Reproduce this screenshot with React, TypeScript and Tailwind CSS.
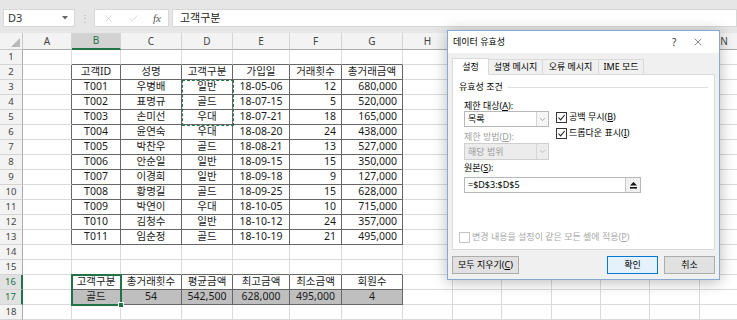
import React from 'react';
import { X, Check, ChevronDown } from 'lucide-react';

// hidden: columns that sit fully under the dialog, their letters are never seen
const COLS = [
  { k: 'A', w: 'w-[49px]' },
  { k: 'B', w: 'w-[49px]' },
  { k: 'C', w: 'w-[61px]' },
  { k: 'D', w: 'w-[51px]' },
  { k: 'E', w: 'w-[57px]' },
  { k: 'F', w: 'w-[52px]' },
  { k: 'G', w: 'w-[61px]' },
  { k: 'H', w: 'w-[50px]' },
  { k: 'I', w: 'w-[49px]', hidden: true },
  { k: 'J', w: 'w-[50px]', hidden: true },
  { k: 'K', w: 'w-[49px]', hidden: true },
  { k: 'L', w: 'w-[49px]', hidden: true },
  { k: 'M', w: 'w-[50px]', hidden: true },
  { k: 'N', w: 'w-[49px]' },
];

const customers = [
  ['T001', '우병배', '일반', '18-05-06', '12', '680,000'],
  ['T002', '표명규', '골드', '18-07-15', '5', '520,000'],
  ['T003', '손미선', '우대', '18-07-21', '18', '165,000'],
  ['T004', '윤연숙', '우대', '18-08-20', '24', '438,000'],
  ['T005', '박찬우', '골드', '18-08-21', '13', '527,000'],
  ['T006', '안순일', '일반', '18-09-15', '15', '350,000'],
  ['T007', '이경희', '일반', '18-09-18', '9', '127,000'],
  ['T008', '황명길', '골드', '18-09-25', '15', '628,000'],
  ['T009', '박연이', '우대', '18-10-05', '10', '715,000'],
  ['T010', '김청수', '일반', '18-10-12', '24', '357,000'],
  ['T011', '임순정', '골드', '18-10-19', '21', '495,000'],
];

// sheet contents, keyed by row number; values start at column B
const sheet: Record<number, string[]> = {
  2: ['고객ID', '성명', '고객구분', '가입일', '거래횟수', '총거래금액'],
  16: ['고객구분', '총거래횟수', '평균금액', '최고금액', '최소금액', '회원수'],
  17: ['골드', '54', '542,500', '628,000', '495,000', '4'],
};
customers.forEach((r, i) => (sheet[i + 3] = r));

const ROWS = Array.from({ length: 18 }, (_, i) => i + 1);

const inTable = (r: number, c: number) =>
  c >= 1 && c <= 6 && ((r >= 2 && r <= 13) || r === 16 || r === 17);

function Cell({ r, c }: { r: number; c: number }) {
  const col = COLS[c];
  const darkRight = inTable(r, c) || inTable(r, c + 1);
  const darkBottom = inTable(r, c) || inTable(r + 1, c);
  const value = sheet[r] && c >= 1 && c <= 6 ? sheet[r][c - 1] : '';
  const rightAlign = r >= 3 && r <= 13 && (c === 5 || c === 6);
  return (
    <div
      className={`${col.w} h-[15px] shrink-0 border-r border-b flex items-center overflow-hidden whitespace-nowrap ${
        darkRight ? 'border-r-[#666]' : 'border-r-[#dadada]'
      } ${darkBottom ? 'border-b-[#666]' : 'border-b-[#dadada]'} ${
        rightAlign ? 'justify-end pr-[5px]' : 'justify-center'
      } ${r === 17 && c >= 1 && c <= 6 ? 'bg-[#bfbfbf]' : 'bg-white'}`}
    >
      {value}
    </div>
  );
}

function CheckBox({ checked, disabled }: { checked?: boolean; disabled?: boolean }) {
  return (
    <div
      className={`w-[11px] h-[11px] shrink-0 border flex items-center justify-center ${
        disabled ? 'border-[#c4c4c4] bg-white' : 'border-[#333] bg-white'
      }`}
    >
      {checked && (
        <svg width="9" height="9" viewBox="0 0 9 9">
          <polyline points="1.5,4.5 3.6,6.8 7.6,2" fill="none" stroke="#222" strokeWidth="1.1" />
        </svg>
      )}
    </div>
  );
}

function Key({ k }: { k: string }) {
  return (
    <>
      (<span className="underline">{k}</span>)
    </>
  );
}

function ValidationDialog() {
  return (
    <div className="absolute left-[447px] top-[30px] w-[273px] h-[250px] border border-[#86a8d2] bg-[#f0f0f0] shadow-[0_2px_14px_rgba(0,0,0,0.28)] flex flex-col text-[9px] text-black">
      <div className="h-[22px] bg-white flex items-center pl-[5px]">
        <span className="w-[200px]">데이터 유효성</span>
        <span className="w-[20px] ml-[19px] text-[10px] text-[#333]">?</span>
        <X size={12} strokeWidth={1.1} color="#222" />
      </div>
      <div className="flex-1 flex flex-col px-[4px] pt-[5px]">
        <div className="flex items-end h-[16px]">
          <div className="w-[37px] h-[17px] -mb-px z-10 bg-white border border-[#d9d9d9] border-b-white flex items-center justify-center">설정</div>
          <div className="w-[54px] h-[15px] border border-l-0 border-b-0 border-[#d9d9d9] flex items-center justify-center">설명 메시지</div>
          <div className="w-[56px] h-[15px] border border-l-0 border-b-0 border-[#d9d9d9] flex items-center justify-center">오류 메시지</div>
          <div className="w-[45px] h-[15px] border border-l-0 border-b-0 border-[#d9d9d9] flex items-center justify-center">IME 모드</div>
        </div>
        <div className="h-[176px] bg-white border border-[#d9d9d9] flex flex-col px-[6px] pt-[6px] pb-[6px]">
          <div className="h-[12px] flex items-center gap-[5px]">
            <span>유효성 조건</span>
            <div className="flex-1 h-px bg-[#dcdcdc]" />
          </div>
          <div className="flex pl-[5px] gap-[7px]">
            <div className="w-[85px] flex flex-col">
              <div className="h-[11px] mt-[7px] flex items-center">
                제한 대상<Key k="A" />:
              </div>
              <div className="h-[16px] border border-[#b8b8b8] bg-white flex items-center">
                <span className="pl-[3px] flex-1">목록</span>
                <div className="w-[12px] h-full border-l border-[#d4d4d4] bg-[#f6f6f6] flex items-center justify-center">
                  <ChevronDown size={9} strokeWidth={1.4} color="#666" />
                </div>
              </div>
              <div className="h-[12px] mt-[4px] flex items-center text-[#a0a0a0]">
                제한 방법<Key k="D" />:
              </div>
              <div className="h-[17px] border border-[#cfcfcf] bg-[#ececec] flex items-center text-[#9a9a9a]">
                <span className="pl-[3px] flex-1">해당 범위</span>
                <div className="w-[12px] h-full border-l border-[#d4d4d4] flex items-center justify-center">
                  <ChevronDown size={9} strokeWidth={1.4} color="#999" />
                </div>
              </div>
            </div>
            <div className="flex flex-col gap-[4px] pt-[18px]">
              <div className="h-[12px] flex items-center gap-[2px]">
                <CheckBox checked />
                <span>공백 무시<Key k="B" /></span>
              </div>
              <div className="h-[12px] flex items-center gap-[2px]">
                <CheckBox checked />
                <span>드롭다운 표시<Key k="I" /></span>
              </div>
            </div>
          </div>
          <div className="pl-[5px] h-[12px] mt-[2px] flex items-center">
            원본<Key k="S" />:
          </div>
          <div className="ml-[5px] mt-[3px] w-[177px] h-[16px] border border-[#b8b8b8] bg-white flex items-center">
            <span className="pl-[3px] flex-1 text-[9px]">=$D$3:$D$5</span>
            <div className="w-[15px] h-full border-l border-[#c8c8c8] bg-[#f0f0f0] flex items-center justify-center">
              <svg width="9" height="9" viewBox="0 0 9 9">
                <polygon points="4.5,1 8,4.5 1,4.5" fill="#111" />
                <rect x="1" y="6" width="7" height="1.6" fill="#111" />
              </svg>
            </div>
          </div>
          <div className="mt-auto h-[12px] flex items-center gap-[2px] text-[#a8a8a8]">
            <CheckBox disabled />
            <span>변경 내용을 설정이 같은 모든 셀에 적용<Key k="P" /></span>
          </div>
        </div>
        <div className="flex items-center mt-[6px]">
          <div className="w-[67px] h-[18px] border border-[#adadad] bg-[#e1e1e1] flex items-center justify-center">
            모두 지우기<Key k="C" />
          </div>
          <div className="ml-auto w-[51px] h-[18px] border border-[#0078d7] bg-[#e5f1fb] flex items-center justify-center">
            확인
          </div>
          <div className="ml-[6px] w-[51px] h-[18px] border border-[#adadad] bg-[#e1e1e1] flex items-center justify-center">
            취소
          </div>
        </div>
      </div>
    </div>
  );
}

export default function App() {
  return (
    <div className="relative w-[737px] h-[320px] overflow-hidden bg-white font-['Noto_Sans','Noto_Sans_CJK_KR',sans-serif] text-[#1a1a1a]">
      {/* formula bar */}
      <div className="h-[33px] bg-[#e6e6e6] flex items-start pt-[9px] pl-[3px]">
        <div className="w-[72px] h-[18px] bg-white border border-[#d8d8d8] flex items-center pl-[4px] pr-[6px] text-[11px] text-[#333]">
          <span className="flex-1">D3</span>
          <svg width="6" height="4" viewBox="0 0 6 4">
            <polygon points="0,0 6,0 3,3.5" fill="#666" />
          </svg>
        </div>
        <div className="w-[19px] h-[18px] flex items-center justify-center text-[#b0b0b0] text-[10px]">⋮</div>
        <div className="w-[75px] h-[18px] bg-white border border-[#d8d8d8] flex items-center pl-[8px] gap-[14px]">
          <X size={11} strokeWidth={1.3} color="#bdbdbd" />
          <Check size={11} strokeWidth={1.3} color="#bdbdbd" />
          <span className="font-['Liberation_Serif',serif] italic text-[11px] text-[#555]">fx</span>
        </div>
        <div className="ml-[3px] flex-1 h-[18px] bg-white border border-[#d8d8d8] flex items-center pl-[7px] text-[11px] text-[#222]">
          고객구분
        </div>
      </div>

      {/* column headers */}
      <div className="flex h-[17px] text-[10px] text-[#444]">
        <div className="w-[23px] shrink-0 h-full bg-[#f3f3f3] border-r border-b border-[#c8c8c8] flex items-end justify-end pr-[2px] pb-[2px]">
          <svg width="9" height="9" viewBox="0 0 9 9">
            <polygon points="9,0 9,9 0,9" fill="#b8b8b8" />
          </svg>
        </div>
        {COLS.map((c) => (
          <div
            key={c.k}
            className={`${c.w} shrink-0 h-full border-r border-r-[#d4d4d4] flex items-center justify-center ${
              c.k === 'B'
                ? 'bg-[#d2d2d2] text-[#217346] border-b-2 border-b-[#217346]'
                : 'bg-[#f3f3f3] border-b border-b-[#ababab]'
            }`}
          >
            {c.hidden ? '' : c.k}
          </div>
        ))}
      </div>

      {/* grid */}
      <div className="flex flex-col text-[10.5px]">
        {ROWS.map((r) => (
          <div key={r} className="flex">
            <div
              className={`w-[23px] h-[15px] shrink-0 border-b border-b-[#d4d4d4] flex items-center justify-center text-[9.5px] ${
                r === 16 || r === 17
                  ? 'bg-[#e1e1e1] text-[#217346] border-r-2 border-r-[#217346]'
                  : 'bg-[#f3f3f3] text-[#444] border-r border-r-[#ababab]'
              }`}
            >
              {r}
            </div>
            {COLS.map((c, ci) => (
              <Cell key={c.k} r={r} c={ci} />
            ))}
          </div>
        ))}
      </div>

      {/* copy marquee D3:D5 */}
      <div className="absolute left-[182px] top-[80px] w-[52px] h-[46px] border-[1.5px] border-dashed border-[#217346]" />
      {/* active selection B16:B17 */}
      <div className="absolute left-[71px] top-[274px] w-[51px] h-[32px] border-2 border-[#217346]" />
      <div className="absolute left-[118px] top-[302px] w-[6px] h-[6px] bg-[#217346] border border-white" />

      <ValidationDialog />
    </div>
  );
}
